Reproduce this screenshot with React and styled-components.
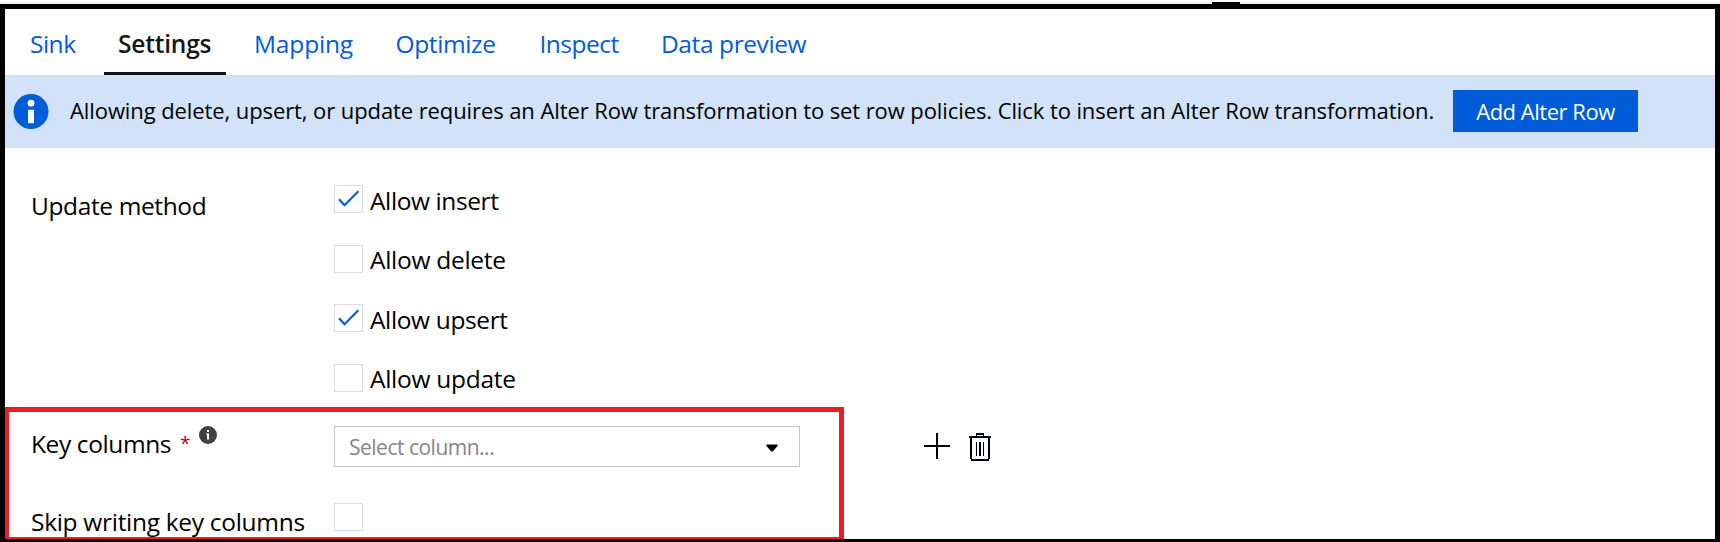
import React from "react";
import styled, { createGlobalStyle } from "styled-components";

const GlobalStyle = createGlobalStyle`
  * { box-sizing: border-box; }
  body { margin: 0; background: #fff; font-family: "Open Sans", "Noto Sans", sans-serif; color: #000; }
`;

const Page = styled.div`
  width: 1720px;
  height: 542px;
  padding-top: 2px;
  overflow: hidden;
  position: relative;
`;

const TopStrip = styled.div`
  height: 2px;
  background: #f0f0f0;
  display: flex;
`;

const StripHandle = styled.div`
  width: 28px;
  height: 2px;
  margin-left: 1212px;
  background: #000;
`;

const Frame = styled.main`
  height: 538px;
  border: 5px solid #000;
  border-bottom-width: 3px;
  background: #fff;
  overflow: hidden;
`;

const Text = styled.span`
  font-size: ${(p) => p.$size || 24.5}px;
  letter-spacing: ${(p) => p.$spacing || 0}px;
  white-space: pre;
`;

const TabBar = styled.nav`
  height: 66px;
  padding-left: 11px;
  display: flex;
  gap: 14px;
`;

const Tab = styled.div`
  width: ${(p) => p.$width}px;
  height: 66px;
  padding: 12px 0 0 14px;
  line-height: 45px;
  font-weight: ${(p) => (p.$active ? 600 : 400)};
  color: ${(p) => (p.$active ? "#161616" : "#015cda")};
  border-bottom: 3px solid ${(p) => (p.$active ? "#161616" : "transparent")};
`;

const Banner = styled.div`
  height: 73px;
  padding-left: 8px;
  border-top: 1px solid #dcdee2;
  border-bottom: 1px solid #dcdee2;
  background: #d2e2f8;
  display: flex;
  align-items: center;
`;

const BannerMessage = styled.div`
  width: 1383px;
  margin-left: 21px;
  line-height: 36px;
`;

const PrimaryButton = styled.button`
  width: 185px;
  height: 42px;
  margin: 0 0 1px;
  padding: 1px 0 0;
  border: 0;
  background: #015cda;
  color: #fff;
  font-family: inherit;
  line-height: 41px;
`;

const Form = styled.section`
  padding: 36px 0 0 26px;
`;

const UpdateRow = styled.div`
  display: grid;
  grid-template-columns: 303px 1fr;
  height: 242px;
`;

const Label = styled.label`
  display: flex;
  height: 36px;
  line-height: 36px;
  margin-top: ${(p) => p.$top || 0}px;
`;

const OptionList = styled.div`
  display: grid;
  grid-template-rows: 60px 59px 60px 28px;
  align-content: start;
  padding-top: 1px;
`;

const Option = styled.label`
  display: flex;
  height: 28px;
  line-height: 32px;
  gap: 7px;
`;

const OptionText = styled.span`
  margin-top: ${(p) => p.$top}px;
`;

const CheckBox = styled.span`
  width: 29px;
  height: 28px;
  flex: none;
  border: 1px solid #dcdcdc;
  background: #fff;
  svg { display: block; }
`;

const KeyRow = styled.div`
  display: grid;
  grid-template-columns: 303px 466px 1fr;
  height: 77px;
`;

const Required = styled.span`
  color: #b4090f;
  margin-left: 9px;
  font-size: 19px;
  line-height: 35px;
`;

const InfoHolder = styled.span`
  margin-left: 8px;
  svg { display: block; }
`;

const Select = styled.div`
  height: 41px;
  border: 1px solid #c4c4c4;
  padding: 2px 21px 0 14px;
  display: flex;
  align-items: center;
  justify-content: space-between;
  color: #868686;
  line-height: 37px;
`;

const RowActions = styled.div`
  display: flex;
  gap: 18px;
  padding: 6px 0 0 123px;
`;

const SkipRow = styled.div`
  display: grid;
  grid-template-columns: 303px 1fr;
`;

const Highlight = styled.div`
  position: absolute;
  left: 5px;
  top: 407px;
  width: 839px;
  height: 132px;
  border: solid #f01c24;
  border-width: 5px 5px 2px 4px;
`;

const InfoIcon = () => (
  <svg width="36" height="36" viewBox="0 0 36 36">
    <circle cx="18" cy="17.5" r="17.5" fill="#015cda" />
    <circle cx="18" cy="9.2" r="3.4" fill="#fff" />
    <rect x="15" y="15.8" width="6" height="13.4" fill="#fff" />
  </svg>
);

const HintIcon = () => (
  <svg width="18" height="18" viewBox="0 0 18 18">
    <circle cx="9" cy="9" r="9" fill="#404040" />
    <rect x="8" y="4" width="2" height="2" fill="#fff" />
    <path d="M7 7.5h3v6H8v-5H7z" fill="#fff" />
  </svg>
);

const Check = () => (
  <svg width="27" height="26" viewBox="0 0 27 26">
    <path d="M4 13.2l5.5 6L23.3 5.3" fill="none" stroke="#015cda" strokeWidth="2.1" />
  </svg>
);

const Caret = () => (
  <svg width="12" height="8" viewBox="0 0 12 8">
    <path d="M1 0.5h10l1 1L6.8 7.5H5.2L0 1.5z" fill="#000" />
  </svg>
);

const PlusIcon = () => (
  <svg width="28" height="28" viewBox="0 0 28 28">
    <path d="M1 14h26M14 1v26" stroke="#000" strokeWidth="2" />
  </svg>
);

const TrashIcon = () => (
  <svg width="22" height="30" viewBox="0 0 22 30">
    <path d="M2 6h18v20H2z" fill="#f5f8fd" />
    <path d="M0 5h22M2 5v21M20 5v21M2 28h18M7 2h8" stroke="#000" strokeWidth="2" />
    <path d="M2 25v2M20 25v2" stroke="#000" strokeWidth="2" />
    <path d="M7.5 2v3M14.5 2v3M7.5 10v14M14.5 10v14" stroke="#000" />
    <path d="M11 10v14" stroke="#000" strokeWidth="2" />
  </svg>
);

const tabs = [
  { name: "Sink", width: 74, spacing: -0.5 },
  { name: "Settings", width: 122, spacing: -0.19, active: true },
  { name: "Mapping", width: 127.5, spacing: -0.17 },
  { name: "Optimize", width: 130, spacing: -0.38 },
  { name: "Inspect", width: 107.5, spacing: -0.5 },
  { name: "Data preview", width: 180, spacing: -0.41 },
];

const options = [
  { name: "Allow insert", checked: true, spacing: -0.4, top: 0 },
  { name: "Allow delete", checked: false, spacing: -0.28, top: -1 },
  { name: "Allow upsert", checked: true, spacing: -0.37, top: 0 },
  { name: "Allow update", checked: false, spacing: -0.28, top: -1 },
];

export default function App() {
  return (
    <Page>
      <GlobalStyle />
      <TopStrip><StripHandle /></TopStrip>
      <Frame>
        <TabBar>
          {tabs.map((t) => (
            <Tab key={t.name} $width={t.width} $active={t.active}>
              <Text $spacing={t.spacing}>{t.name}</Text>
            </Tab>
          ))}
        </TabBar>
        <Banner>
          <InfoIcon />
          <BannerMessage>
            <Text $size={22} $spacing={-0.091}>
              Allowing delete, upsert, or update requires an Alter Row transformation to set row policies. Click to insert an Alter Row transformation.
            </Text>
          </BannerMessage>
          <PrimaryButton>
            <Text $size={22} $spacing={-0.477}>Add Alter Row</Text>
          </PrimaryButton>
        </Banner>
        <Form>
          <UpdateRow>
            <Label $top={4}><Text $spacing={-0.38}>Update method</Text></Label>
            <OptionList>
              {options.map((o) => (
                <Option key={o.name}>
                  <CheckBox>{o.checked && <Check />}</CheckBox>
                  <OptionText $top={o.top}><Text $spacing={o.spacing}>{o.name}</Text></OptionText>
                </Option>
              ))}
            </OptionList>
          </UpdateRow>
          <KeyRow>
            <Label>
              <Text $spacing={-0.4}>Key columns</Text>
              <Required>*</Required>
              <InfoHolder><HintIcon /></InfoHolder>
            </Label>
            <Select>
              <Text $size={21} $spacing={-0.5}>Select column...</Text>
              <Caret />
            </Select>
            <RowActions>
              <PlusIcon />
              <TrashIcon />
            </RowActions>
          </KeyRow>
          <SkipRow>
            <Label $top={1}><Text $spacing={-0.3}>Skip writing key columns</Text></Label>
            <CheckBox />
          </SkipRow>
        </Form>
      </Frame>
      <Highlight />
    </Page>
  );
}
